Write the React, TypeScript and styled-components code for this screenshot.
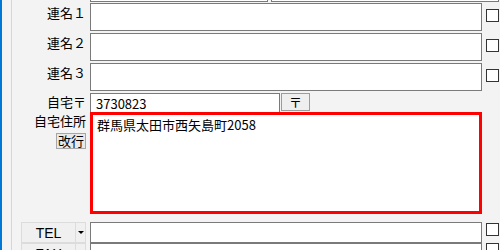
import React from 'react';
import styled, { createGlobalStyle } from 'styled-components';

const GlobalStyle = createGlobalStyle`
  html, body {
    margin: 0;
    padding: 0;
    background: #f3f3f3;
  }
  body {
    font-family: "Noto Sans CJK JP", "Noto Sans", sans-serif;
    font-size: 13px;
    color: #000;
  }
`;

const Window = styled.div`
  width: 500px;
  height: 250px;
  overflow: hidden;
  display: flex;
  background: #f3f3f3;
`;

const AccentBar = styled.div`
  width: 2px;
  flex-shrink: 0;
  background: #0078d7;
`;

const Gutter = styled.div`
  width: 9px;
  flex-shrink: 0;
  border-right: 1px solid #d6d6d6;
`;

const Form = styled.div`
  display: flex;
  flex-direction: column;
  flex-shrink: 0;
`;

const Row = styled.div<{ $top: number; $height: number }>`
  display: grid;
  grid-template-columns: 74px 392px 13px;
  column-gap: 4px;
  margin-top: ${(p) => p.$top}px;
  height: ${(p) => p.$height}px;
  flex-shrink: 0;
`;

const Label = styled.div<{ $pad?: number }>`
  text-align: right;
  line-height: 18px;
  padding-top: ${(p) => p.$pad ?? 0}px;
  white-space: nowrap;
`;

const LabelStack = styled.div`
  display: flex;
  flex-direction: column;
  align-items: flex-end;
`;

const TextBox = styled.input`
  box-sizing: border-box;
  width: ${(p) => (p.width ? `${p.width}px` : '100%')};
  height: 100%;
  margin: 0;
  padding: 0 5px;
  border: 1px solid #7a7a7a;
  background: #fff;
  font: inherit;
  color: #000;
  outline: none;
`;

const AddressBox = styled.textarea`
  box-sizing: border-box;
  width: 100%;
  height: 100%;
  margin: 0;
  padding: 1px 4px;
  border: 3px solid #ff0000;
  background: #fff;
  font: inherit;
  line-height: 18px;
  color: #000;
  resize: none;
  outline: none;
`;

const FieldGroup = styled.div<{ $span?: boolean; $gap: number }>`
  display: flex;
  gap: ${(p) => p.$gap}px;
  grid-column: ${(p) => (p.$span ? '2 / 4' : 'auto')};
  height: 100%;
`;

const Check = styled.input.attrs({ type: 'checkbox' })<{ $top: number }>`
  appearance: none;
  box-sizing: border-box;
  width: 13px;
  height: 13px;
  margin: ${(p) => p.$top}px 0 0;
  border: 1px solid #333;
  background: #fff;
  align-self: start;
`;

const SmallButton = styled.button`
  box-sizing: border-box;
  margin: 0;
  padding: 0;
  border: 1px solid #a6a6a6;
  background: #e9e9e9;
  font: inherit;
  color: #000;
  line-height: 14px;
`;

const ZipButton = styled(SmallButton)`
  width: 29px;
  height: 18px;
  border-color: #9c9c9c;
  background: #efefef;
  line-height: 16px;
`;

const BreakButton = styled(SmallButton)`
  width: 30px;
  height: 16px;
  margin-top: 3px;
`;

const Combo = styled.div`
  display: flex;
  justify-content: flex-end;
  height: 100%;
`;

const ComboMain = styled.button`
  box-sizing: border-box;
  width: 55px;
  height: 100%;
  margin: 0;
  padding: 0;
  border: 1px solid #dcdcdc;
  background: #f0f0f0;
  font-family: "Liberation Sans", Arial, sans-serif;
  font-size: 14px;
  color: #000;
`;

const ComboArrow = styled.button`
  box-sizing: border-box;
  width: 10px;
  height: 100%;
  margin: 0;
  padding: 0;
  border: 1px solid #dcdcdc;
  border-left: none;
  background: #f0f0f0;
  display: flex;
  align-items: center;
  justify-content: center;

  &::after {
    content: '';
    border-left: 3px solid transparent;
    border-right: 3px solid transparent;
    border-top: 3px solid #000;
  }
`;

const names = ['連名１', '連名２', '連名３'];

export default function App() {
  return (
    <>
      <GlobalStyle />
      <Window>
        <AccentBar />
        <Gutter />
        <Form>
          <Row $top={-19} $height={20}>
            <div />
            <FieldGroup $span $gap={3}>
              <TextBox width={316} readOnly />
              <TextBox readOnly />
            </FieldGroup>
          </Row>

          {names.map((n) => (
            <Row key={n} $top={2} $height={28}>
              <Label $pad={1}>{n}</Label>
              <TextBox readOnly />
              <Check $top={6} readOnly />
            </Row>
          ))}

          <Row $top={2} $height={18}>
            <Label>自宅〒</Label>
            <FieldGroup $gap={1}>
              <TextBox width={190} value="3730823" readOnly />
              <ZipButton>〒</ZipButton>
            </FieldGroup>
            <div />
          </Row>

          <Row $top={1} $height={102}>
            <LabelStack>
              <Label>自宅住所</Label>
              <BreakButton>改行</BreakButton>
            </LabelStack>
            <AddressBox value="群馬県太田市西矢島町2058" readOnly />
            <div />
          </Row>

          <Row $top={8} $height={19}>
            <Combo>
              <ComboMain>TEL</ComboMain>
              <ComboArrow />
            </Combo>
            <TextBox readOnly />
            <Check $top={1} readOnly />
          </Row>

          <Row $top={2} $height={19}>
            <Combo>
              <ComboMain>FAX</ComboMain>
              <ComboArrow />
            </Combo>
            <TextBox readOnly />
            <Check $top={0} readOnly />
          </Row>
        </Form>
      </Window>
    </>
  );
}
